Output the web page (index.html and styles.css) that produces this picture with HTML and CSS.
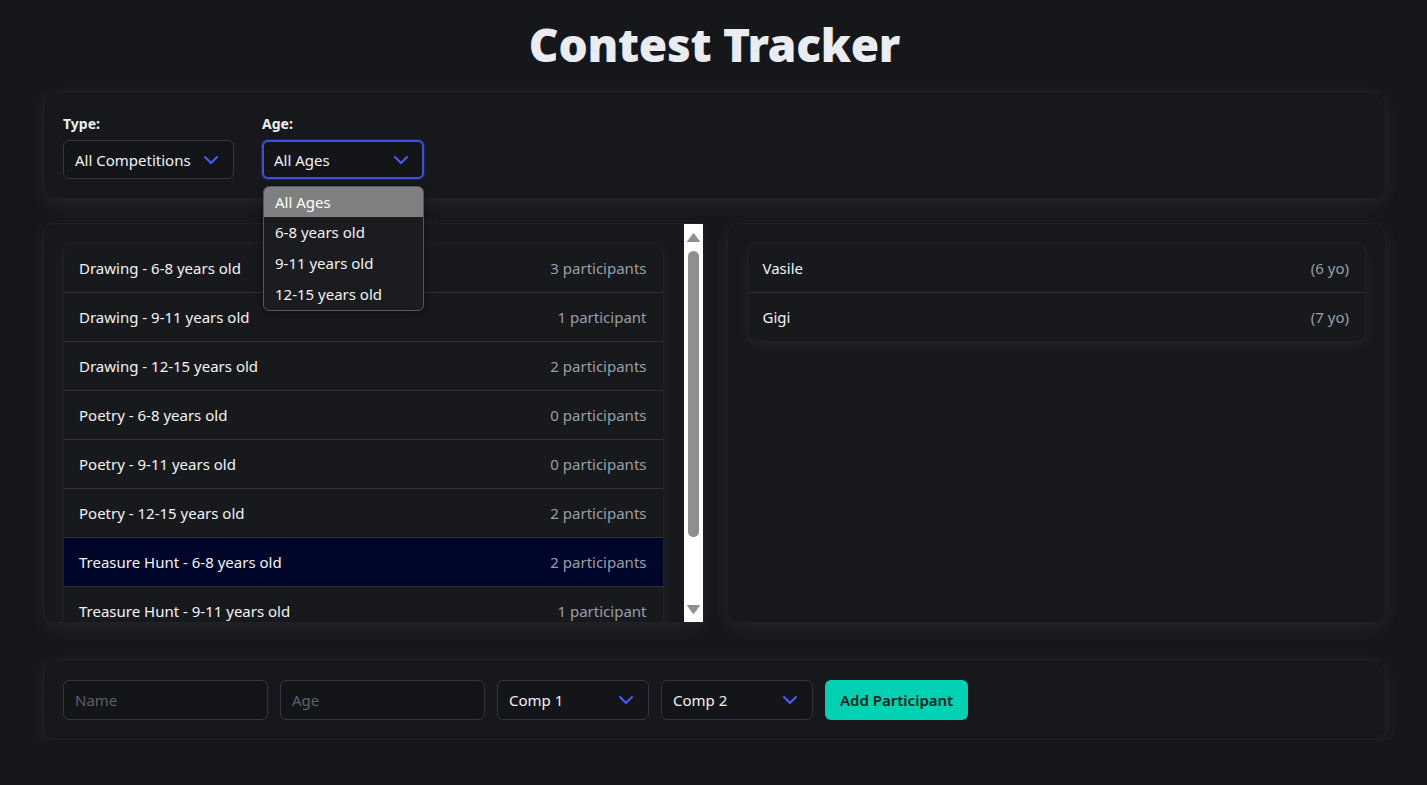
FILE: index.html
```html
<!DOCTYPE html>
<html lang="en">
<head>
<meta charset="utf-8">
<title>Contest Tracker</title>
<link rel="stylesheet" href="styles.css">
</head>
<body>
<div class="app">
  <h1 class="title">Contest Tracker</h1>

  <section class="card filters">
    <div class="field">
      <label class="label">Type:</label>
      <div class="select select-type">
        <span>All Competitions</span>
        <svg class="chev" width="16" height="10" viewBox="0 0 16 10"><path d="M2 2l6 6 6-6" fill="none" stroke="#4b5cff" stroke-width="2" stroke-linecap="round" stroke-linejoin="round"/></svg>
      </div>
    </div>
    <div class="field field-age">
      <label class="label">Age:</label>
      <div class="select select-age focused">
        <span>All Ages</span>
        <svg class="chev" width="16" height="10" viewBox="0 0 16 10"><path d="M2 2l6 6 6-6" fill="none" stroke="#4b5cff" stroke-width="2" stroke-linecap="round" stroke-linejoin="round"/></svg>
      </div>
      <ul class="dropdown">
        <li class="opt active">All Ages</li>
        <li class="opt">6-8 years old</li>
        <li class="opt">9-11 years old</li>
        <li class="opt">12-15 years old</li>
      </ul>
    </div>
  </section>

  <div class="main">
    <section class="card panel-scroll">
      <div class="viewport">
        <ul class="list">
          <li class="row"><span>Drawing - 6-8 years old</span><span class="muted">3 participants</span></li>
          <li class="row"><span>Drawing - 9-11 years old</span><span class="muted">1 participant</span></li>
          <li class="row"><span>Drawing - 12-15 years old</span><span class="muted">2 participants</span></li>
          <li class="row"><span>Poetry - 6-8 years old</span><span class="muted">0 participants</span></li>
          <li class="row"><span>Poetry - 9-11 years old</span><span class="muted">0 participants</span></li>
          <li class="row"><span>Poetry - 12-15 years old</span><span class="muted">2 participants</span></li>
          <li class="row selected"><span>Treasure Hunt - 6-8 years old</span><span class="muted">2 participants</span></li>
          <li class="row"><span>Treasure Hunt - 9-11 years old</span><span class="muted">1 participant</span></li>
        </ul>
      </div>
      <div class="scrollbar">
        <svg class="sb-arrow" width="19" height="19" viewBox="0 0 19 19"><path d="M9.5 10.5 L15.5 18.5 H3.5 Z" fill="#8f8f8f" stroke="#8f8f8f" stroke-width="1" stroke-linejoin="round"/></svg>
        <div class="sb-track"><div class="sb-thumb"></div></div>
        <svg class="sb-arrow" width="19" height="19" viewBox="0 0 19 19"><path d="M3.5 1.5 H15.5 L9.5 9.5 Z" fill="#8f8f8f" stroke="#8f8f8f" stroke-width="1" stroke-linejoin="round"/></svg>
      </div>
    </section>
    <section class="card panel">
      <ul class="list">
        <li class="row"><span>Vasile</span><span class="muted">(6 yo)</span></li>
        <li class="row"><span>Gigi</span><span class="muted">(7 yo)</span></li>
      </ul>
    </section>
  </div>

  <section class="card form">
    <input class="input" type="text" placeholder="Name">
    <input class="input" type="text" placeholder="Age">
    <div class="select select-comp">
      <span>Comp 1</span>
      <svg class="chev" width="16" height="10" viewBox="0 0 16 10"><path d="M2 2l6 6 6-6" fill="none" stroke="#4b5cff" stroke-width="2" stroke-linecap="round" stroke-linejoin="round"/></svg>
    </div>
    <div class="select select-comp">
      <span>Comp 2</span>
      <svg class="chev" width="16" height="10" viewBox="0 0 16 10"><path d="M2 2l6 6 6-6" fill="none" stroke="#4b5cff" stroke-width="2" stroke-linecap="round" stroke-linejoin="round"/></svg>
    </div>
    <button class="btn" type="button">Add Participant</button>
  </section>
</div>
</body>
</html>
```
FILE: styles.css
```css
* { box-sizing: border-box; }

html, body {
  margin: 0;
  padding: 0;
  background: #16171b;
  color: #eceef2;
  font-family: "Noto Sans", "Open Sans", sans-serif;
  font-size: 15px;
}

.app {
  padding: 0 41px 0 43px;
}

.title {
  margin: 14px 0 17px;
  text-align: center;
  font-size: 46px;
  line-height: 60px;
  font-weight: 900;
  color: #eaecf1;
  letter-spacing: -0.3px;
}

.card {
  background: #17181c;
  border: 1px solid #1f2025;
  border-radius: 12px;
  box-shadow: 0 5px 20px rgba(255, 255, 255, 0.06);
}

.filters {
  display: flex;
  gap: 28px;
  padding: 22px 19px 19px 19px;
  height: 108px;
}

.field {
  display: flex;
  flex-direction: column;
  gap: 6px;
}

.field-age {
  position: relative;
}

.label {
  font-size: 14px;
  font-weight: 700;
  line-height: 20px;
  color: #eceef2;
}

.select {
  display: flex;
  align-items: center;
  justify-content: space-between;
  height: 40px;
  padding: 0 14px 0 11px;
  border: 1px solid #34363d;
  border-radius: 6px;
  background: #141519;
  color: #f1f2f5;
  font-size: 15px;
}

.select-type { width: 171px; }
.select-age { width: 162px; }

.focused {
  border: 2px solid #3c4fe0;
  padding: 0 13px 0 10px;
  box-shadow: 0 0 0 1px rgba(60, 79, 224, 0.25);
}

.chev { display: block; flex: none; }

.dropdown {
  position: absolute;
  z-index: 5;
  top: 72px;
  left: 1px;
  width: 161px;
  margin: 0;
  padding: 0;
  list-style: none;
  background: #1b1c20;
  border: 1px solid #55575d;
  border-radius: 6px;
  overflow: hidden;
  box-shadow: 0 2px 8px rgba(0, 0, 0, 0.4);
}

.opt {
  height: 31px;
  line-height: 31px;
  padding: 0 11px;
  font-size: 15px;
  color: #f1f2f5;
}

.opt.active {
  background: #808080;
  color: #ffffff;
  height: 30px;
  line-height: 30px;
}

.main {
  display: grid;
  grid-template-columns: 1fr 1fr;
  gap: 24px;
  margin-top: 24px;
}

.panel {
  height: 400px;
  padding: 19px;
}

.panel-scroll {
  display: flex;
  height: 400px;
  overflow: hidden;
  border-right: none;
  border-radius: 12px 0 0 12px;
}

.viewport {
  flex: 1;
  min-width: 0;
  overflow: hidden;
  padding: 19px 20px 0 19px;
}

.scrollbar {
  flex: none;
  width: 19px;
  display: flex;
  flex-direction: column;
  background: #ffffff;
  margin-top: -1px;
  margin-bottom: -1px;
}

.sb-arrow { display: block; flex: none; }

.sb-track {
  flex: 1;
  padding: 9px 4px 0 4px;
}

.sb-thumb {
  height: 286px;
  background: #8f8f8f;
  border-radius: 6px;
}

.list {
  margin: 0;
  padding: 0;
  list-style: none;
  background: #18191d;
  border: 1px solid #1f2126;
  border-radius: 10px;
  overflow: hidden;
  box-shadow: 0 4px 16px rgba(255, 255, 255, 0.05);
}

.row {
  display: flex;
  align-items: center;
  justify-content: space-between;
  height: 49px;
  padding: 0 16px 0 15px;
  border-top: 1px solid #2e3037;
  font-size: 15px;
  color: #f2f3f6;
}

.row:first-child { border-top: none; height: 48px; }

.row.selected { background: #00052a; }

.muted { color: #9a9ea8; }

.form {
  display: flex;
  align-items: center;
  gap: 12px;
  margin-top: 36px;
  padding: 19px;
  height: 81px;
}

.input {
  width: 205px;
  height: 40px;
  padding: 0 11px;
  border: 1px solid #34363d;
  border-radius: 6px;
  background: #141519;
  color: #f1f2f5;
  font-family: inherit;
  font-size: 15px;
  outline: none;
}

.input::placeholder { color: #5d6068; }

.select-comp { width: 152px; padding-left: 11px; }

.btn {
  height: 40px;
  padding: 0 15px;
  border: none;
  border-radius: 6px;
  background: #00d1b2;
  color: #10221f;
  font-family: inherit;
  font-size: 15px;
  font-weight: 600;
}
```
